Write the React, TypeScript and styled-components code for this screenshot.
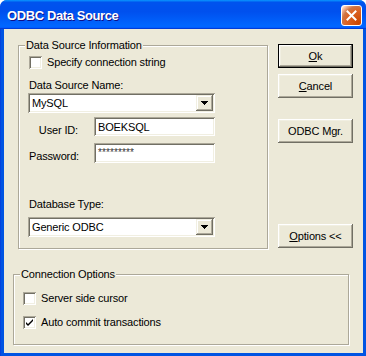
import React from "react";
import styled, { createGlobalStyle } from "styled-components";

const GlobalStyle = createGlobalStyle`
  html, body { margin: 0; padding: 0; background: #ffffff; }
  body { font-family: "Liberation Sans", Arial, sans-serif; font-size: 11px; color: #000; letter-spacing: -0.15px; }
  * { box-sizing: border-box; }
`;

const FACE = "#ECE9D8";
const SHADOW = "#ACA899";
const DARK = "#716F64";
const LIGHT = "#F1EFE2";

const Window = styled.div`
  width: 366px;
  height: 356px;
  display: flex;
  flex-direction: column;
  background: #0054e3;
  border-radius: 7px 7px 0 0;
  overflow: hidden;
`;

const TitleBar = styled.div`
  height: 29px;
  flex: none;
  display: flex;
  align-items: center;
  justify-content: space-between;
  padding: 2px 4px 0 7px;
  background: linear-gradient(
    180deg,
    #0997ff,
    #0053ee 8%,
    #0050ee 40%,
    #0066ff 88%,
    #0066ff 93%,
    #005bff 95%,
    #003dd7 96%,
    #003dd7
  );
`;

const Title = styled.span`
  font-family: "Liberation Sans", Arial, sans-serif;
  font-weight: bold;
  font-size: 13px;
  line-height: 13px;
  letter-spacing: -0.4px;
  color: #ffffff;
  text-shadow: 1px 1px #0f1089;
`;

const CloseBtn = styled.div`
  width: 21px;
  height: 21px;
  display: flex;
  align-items: center;
  justify-content: center;
  border: 1px solid #ffffff;
  border-radius: 3px;
  background: radial-gradient(circle at 90% 90%, #cc4600 0%, #dc6527 55%, #cd7546 70%, #ffccb2 90%, #ffffff 100%);
`;

const Frame = styled.div`
  flex: 1;
  display: flex;
  padding: 0 3px 3px 4px;
  background: linear-gradient(90deg, #0831d9 0, #0054e3 1px, #0054e3 100%);
`;

const Client = styled.div`
  flex: 1;
  background: ${FACE};
  display: flex;
  flex-direction: column;
  padding-top: 15px;
`;

const TopRow = styled.div`
  display: flex;
  align-items: flex-start;
  padding-left: 14px;
`;

const GroupBox = styled.div<{ $w: number; $h: number; $pad: string; $mt?: number; $ml?: number }>`
  position: relative;
  width: ${(p) => p.$w}px;
  height: ${(p) => p.$h}px;
  margin-top: ${(p) => p.$mt ?? 0}px;
  margin-left: ${(p) => p.$ml ?? 0}px;
  border: 1px solid ${SHADOW};
  box-shadow: inset 1px 1px #ffffff, 1px 1px #ffffff;
  padding: ${(p) => p.$pad};
  display: flex;
  flex-direction: column;
  align-items: flex-start;
`;

const Legend = styled.span`
  position: absolute;
  top: -7px;
  left: 6px;
  padding: 0 1px;
  background: ${FACE};
  line-height: 13px;
`;

const CheckRow = styled.label<{ $mt?: number; $ml?: number }>`
  display: flex;
  align-items: center;
  gap: 5px;
  height: 13px;
  line-height: 13px;
  margin-top: ${(p) => p.$mt ?? 0}px;
  margin-left: ${(p) => p.$ml ?? 0}px;
`;

const CheckBox = styled.span`
  width: 13px;
  height: 13px;
  flex: none;
  background: #ffffff;
  box-shadow: inset 1px 1px ${SHADOW}, inset -1px -1px #ffffff, inset 2px 2px ${DARK}, inset -2px -2px ${LIGHT};
  display: flex;
  align-items: center;
  justify-content: center;
`;

const Text = styled.div<{ $mt?: number; $ml?: number }>`
  line-height: 13px;
  margin-top: ${(p) => p.$mt ?? 0}px;
  margin-left: ${(p) => p.$ml ?? 0}px;
  white-space: nowrap;
`;

const Sunken = styled.div<{ $w: number; $h: number; $mt?: number }>`
  width: ${(p) => p.$w}px;
  height: ${(p) => p.$h}px;
  margin-top: ${(p) => p.$mt ?? 0}px;
  background: #ffffff;
  box-shadow: inset 1px 1px ${SHADOW}, inset -1px -1px #ffffff, inset 2px 2px ${DARK}, inset -2px -2px ${LIGHT};
  padding: 2px;
  display: flex;
  align-items: stretch;
`;

const FieldText = styled.div<{ $mask?: boolean }>`
  flex: 1;
  padding: ${(p) => (p.$mask ? "1px 0 0 2px" : "2px 0 0 2px")};
  line-height: 13px;
  font-size: ${(p) => (p.$mask ? "10px" : "11px")};
  color: ${(p) => (p.$mask ? "#333" : "#000")};
  letter-spacing: ${(p) => (p.$mask ? "0.1px" : "-0.15px")};
  white-space: nowrap;
`;

const DropButton = styled.div`
  width: 17px;
  flex: none;
  background: ${FACE};
  box-shadow: inset -1px -1px ${DARK}, inset 1px 1px ${LIGHT}, inset -2px -2px ${SHADOW}, inset 2px 2px #ffffff;
  display: flex;
  align-items: center;
  justify-content: center;
`;

const FormGrid = styled.div<{ $mt?: number }>`
  display: grid;
  grid-template-columns: 49px 121px;
  column-gap: 16px;
  row-gap: 6px;
  margin-top: ${(p) => p.$mt ?? 0}px;
  margin-left: 1px;
`;

const FormLabel = styled.div`
  text-align: right;
  line-height: 13px;
  padding-top: 7px;
  white-space: nowrap;
`;

const ButtonCol = styled.div`
  display: flex;
  flex-direction: column;
  margin-left: 10px;
`;

const Button = styled.div<{ $mt?: number; $default?: boolean }>`
  width: 75px;
  height: 24px;
  margin-top: ${(p) => p.$mt ?? 0}px;
  display: flex;
  align-items: center;
  justify-content: center;
  background: ${FACE};
  line-height: 13px;
  box-shadow: ${(p) =>
    p.$default
      ? `inset 0 0 0 1px #000000, inset -2px -2px ${DARK}, inset 2px 2px #ffffff, inset -3px -3px ${SHADOW}, inset 3px 3px ${LIGHT}`
      : `inset -1px -1px ${DARK}, inset 1px 1px #ffffff, inset -2px -2px ${SHADOW}, inset 2px 2px ${LIGHT}`};
`;

const U = styled.span`
  text-decoration: underline;
  text-underline-offset: 1px;
`;

const Arrow = () => (
  <svg width="7" height="4" viewBox="0 0 7 4">
    <path d="M0 0h7L3.5 4z" fill="#000" shapeRendering="crispEdges" />
  </svg>
);

const Check = () => (
  <svg width="9" height="9" viewBox="0 0 9 9">
    <path d="M1 4 L3 6 L8 1 V3 L3 8 L1 6 Z" fill="#000" />
  </svg>
);

const CloseX = () => (
  <svg width="11" height="11" viewBox="0 0 11 11">
    <path d="M1.5 1.5 L9.5 9.5 M9.5 1.5 L1.5 9.5" stroke="#fff" strokeWidth="2" strokeLinecap="square" />
  </svg>
);

const Combo: React.FC<{ value: string; mt?: number }> = ({ value, mt }) => (
  <Sunken $w={187} $h={20} $mt={mt}>
    <FieldText>{value}</FieldText>
    <DropButton>
      <Arrow />
    </DropButton>
  </Sunken>
);

export default function App() {
  return (
    <>
      <GlobalStyle />
      <Window>
        <TitleBar>
          <Title>ODBC Data Source</Title>
          <CloseBtn>
            <CloseX />
          </CloseBtn>
        </TitleBar>
        <Frame>
          <Client>
            <TopRow>
              <GroupBox $w={250} $h={204} $mt={1} $pad="10px 9px 0 9px">
                <Legend>Data Source Information</Legend>
                <CheckRow $ml={1}>
                  <CheckBox />
                  <span>Specify connection string</span>
                </CheckRow>
                <Text $mt={10} $ml={1}>Data Source Name:</Text>
                <Combo value="MySQL" mt={1} />
                <FormGrid $mt={4}>
                  <FormLabel>User ID:</FormLabel>
                  <Sunken $w={121} $h={19}>
                    <FieldText>BOEKSQL</FieldText>
                  </Sunken>
                  <FormLabel>Password:</FormLabel>
                  <Sunken $w={121} $h={20}>
                    <FieldText $mask>*********</FieldText>
                  </Sunken>
                </FormGrid>
                <Text $mt={35} $ml={1}>Database Type:</Text>
                <Combo value="Generic ODBC" mt={6} />
              </GroupBox>
              <ButtonCol>
                <Button $default>
                  <span><U>O</U>k</span>
                </Button>
                <Button $mt={6}>
                  <span><U>C</U>ancel</span>
                </Button>
                <Button $mt={21}>ODBC Mgr.</Button>
                <Button $mt={81}>
                  <span><U>O</U>ptions &lt;&lt;</span>
                </Button>
              </ButtonCol>
            </TopRow>
            <GroupBox $w={336} $h={71} $mt={25} $ml={9} $pad="17px 9px 0 9px">
              <Legend>Connection Options</Legend>
              <CheckRow>
                <CheckBox />
                <span>Server side cursor</span>
              </CheckRow>
              <CheckRow $mt={11}>
                <CheckBox>
                  <Check />
                </CheckBox>
                <span>Auto commit transactions</span>
              </CheckRow>
            </GroupBox>
          </Client>
        </Frame>
      </Window>
    </>
  );
}
